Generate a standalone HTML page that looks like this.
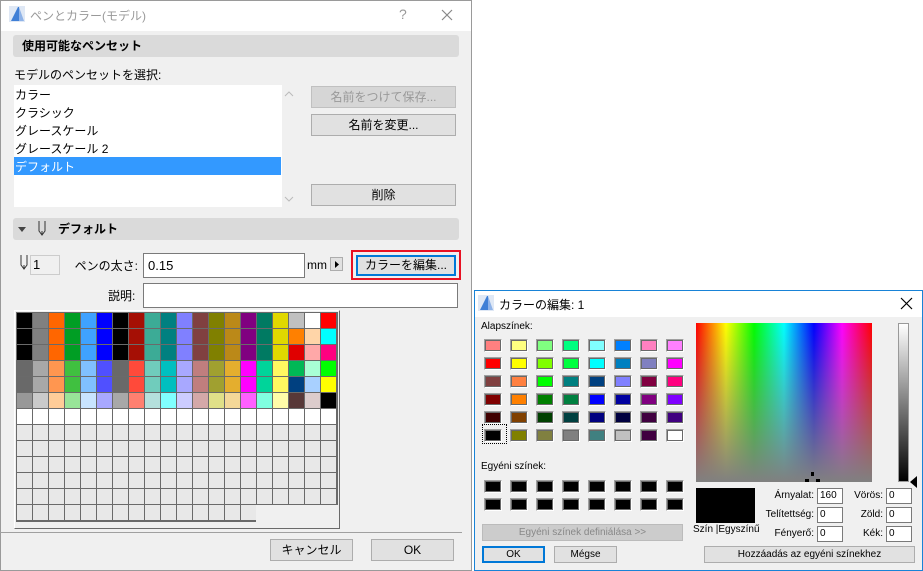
<!DOCTYPE html>
<html><head><meta charset="utf-8">
<style>
*{box-sizing:border-box;margin:0;padding:0}
body{width:923px;height:571px;background:#fff;position:relative;overflow:hidden;font-family:"Liberation Sans","Noto Sans CJK JP",sans-serif;font-size:12px;color:#000}
.a{position:absolute;white-space:nowrap}
.btn{position:absolute;background:#e1e1e1;border:1px solid #adadad;text-align:center;font-size:12px;line-height:20px;white-space:nowrap}
.inp{position:absolute;background:#fff;border:1px solid #7a7a7a}
.hdr{position:absolute;background:#dadada;border-radius:3px;font-weight:bold;font-size:12px;line-height:22px}
.sw{position:absolute;width:18px;height:13px;border:1px solid #a0a0a0;border-right-color:#fff;border-bottom-color:#fff}
.sw i{display:block;width:16px;height:11px;border:1px solid #696969}
.c{position:absolute;width:15px;height:15px}
</style></head><body>
<div class="a" style="left:0;top:0;width:472px;height:571px;background:#f0f0f0;border:1px solid #9a9a9a"></div>
<div class="a" style="top:1px;left:1px;width:470px;height:30px;background:#fff"></div>
<svg class="a" style="left:9px;top:6px" width="16" height="16"><rect x="0" y="0" width="16" height="16" fill="#dfe8f5"/><path d="M2 15 L9 1 L10 1 L10 15Z" fill="#3f7fd6"/><path d="M10 1 L15 15 L10 15Z" fill="#8fb3e8"/></svg>
<div class="a" style="left:30px;top:7px;color:#999;font-size:12px">ペンとカラー(モデル)</div>
<div class="a" style="left:399px;top:6px;color:#999;font-size:14px">?</div>
<svg class="a" style="left:441px;top:9px" width="12" height="12"><path d="M1 1L11 11M11 1L1 11" stroke="#888" stroke-width="1.2"/></svg>

<div class="hdr" style="left:13px;top:35px;width:446px;height:22px;padding-left:9px">使用可能なペンセット</div>
<div class="a" style="left:14px;top:66px">モデルのペンセットを選択:</div>
<div class="a" style="left:14px;top:85px;width:268px;height:122px;background:#fff"></div>
<div class="a" style="left:14px;top:157px;width:267px;height:18px;background:#3399ff"></div>
<div class="a" style="left:15px;top:86px;line-height:18px">カラー<br>クラシック<br>グレースケール<br>グレースケール 2<br><span style="color:#fff">デフォルト</span></div>
<svg class="a" style="left:284px;top:90px" width="10" height="8"><path d="M1 6L5 2L9 6" stroke="#bbb" fill="none"/></svg>
<svg class="a" style="left:284px;top:195px" width="10" height="8"><path d="M1 2L5 6L9 2" stroke="#bbb" fill="none"/></svg>
<div class="btn" style="left:311px;top:86px;width:145px;height:22px;background:#d6d6d6;border-color:#c0c0c0;color:#999">名前をつけて保存...</div>
<div class="btn" style="left:311px;top:114px;width:145px;height:22px">名前を変更...</div>
<div class="btn" style="left:311px;top:184px;width:145px;height:22px">削除</div>

<div class="hdr" style="left:13px;top:218px;width:446px;height:22px;padding-left:45px">デフォルト</div>
<svg class="a" style="left:17px;top:225px" width="10" height="8"><path d="M1 2L9 2L5 7Z" fill="#444"/></svg>
<svg class="a" style="left:37px;top:220px" width="10" height="17"><path d="M2 1V11L5 15L8 11V1" stroke="#333" fill="none"/><path d="M5 11V15" stroke="#333"/></svg>
<svg class="a" style="left:19px;top:254px" width="10" height="18"><path d="M2 1V11L5 15L8 11V1" stroke="#333" fill="none"/><path d="M5 11V15" stroke="#333"/></svg>
<div class="a" style="left:30px;top:255px;width:30px;height:20px;border:1px solid #ccc;background:#f0f0f0;line-height:18px;padding-left:2px;font-size:13px">1</div>
<div class="a" style="left:60px;top:257px;width:78px;text-align:right;font-size:12px">ペンの太さ:</div>
<div class="inp" style="left:143px;top:253px;width:162px;height:25px;line-height:23px;padding-left:4px;font-size:13px">0.15</div>
<div class="a" style="left:307px;top:258px;font-size:12px">mm</div>
<div class="a" style="left:330px;top:257px;width:13px;height:14px;border:1px solid #adadad;background:#e1e1e1"></div>
<svg class="a" style="left:333px;top:260px" width="8" height="9"><path d="M2 1L6 4.5L2 8Z" fill="#000"/></svg>
<div class="a" style="left:351px;top:250px;width:110px;height:30px;border:2px solid #e81123"></div>
<div class="btn" style="left:356px;top:255px;width:100px;height:21px;border:2px solid #0078d7;line-height:17px">カラーを編集...</div>
<div class="a" style="left:108px;top:287px">説明:</div>
<div class="inp" style="left:143px;top:283px;width:315px;height:25px"></div>

<div class="a" style="left:14px;top:310px;width:326px;height:219px;border:1px solid #fff;border-right-color:#6a6a6a;border-bottom-color:#6a6a6a;background:#f0f0f0"></div>
<div class="a" style="left:16px;top:312px;width:322px;height:210px;background:#6a6a6a"></div>
<div class="a" style="left:256px;top:505px;width:82px;height:17px;background:#f0f0f0"></div>
<div id="grid"></div>

<div class="a" style="left:0;top:532px;width:462px;height:1px;background:#a0a0a0"></div>
<div class="btn" style="left:270px;top:539px;width:83px;height:22px">キャンセル</div>
<div class="btn" style="left:371px;top:539px;width:83px;height:22px">OK</div>

<div class="a" style="left:474px;top:290px;width:449px;height:281px;background:#f0f0f0;border:1px solid #1883d7"></div>
<div class="a" style="left:475px;top:291px;width:447px;height:26px;background:#fff"></div>
<svg class="a" style="left:478px;top:295px" width="16" height="16"><rect width="16" height="16" fill="#dfe8f5"/><path d="M2 15 L9 1 L10 1 L10 15Z" fill="#3f7fd6"/><path d="M10 1 L15 15 L10 15Z" fill="#8fb3e8"/></svg>
<div class="a" style="left:499px;top:296px;font-size:12px">カラーの編集: 1</div>
<svg class="a" style="left:900px;top:297px" width="13" height="13"><path d="M1 1L12 12M12 1L1 12" stroke="#000" stroke-width="1.2"/></svg>
<div class="a" style="left:481px;top:321px;font-size:10px">Alapszínek:</div>
<div class="a" style="left:481px;top:461px;font-size:10px">Egyéni színek:</div>
<div id="basic"></div>
<div class="a" style="left:482px;top:424px;width:25px;height:20px;border:1px dotted #000"></div>
<div class="btn" style="left:482px;top:524px;width:201px;height:17px;line-height:15px;font-size:10px;color:#888;background:#cccccc;border-color:#bbb">Egyéni színek definiálása &gt;&gt;</div>
<div class="btn" style="left:482px;top:546px;width:63px;height:17px;line-height:13px;font-size:10px;border:2px solid #0078d7">OK</div>
<div class="btn" style="left:554px;top:546px;width:63px;height:17px;line-height:15px;font-size:10px">Mégse</div>
<div class="a" style="left:696px;top:323px;width:176px;height:159px;background:linear-gradient(to bottom,rgba(128,128,128,0),#808080),linear-gradient(to right,#f00,#ff0 17%,#0f0 33%,#0ff 50%,#00f 67%,#f0f 83%,#f00)"></div>
<div class="a" style="left:811px;top:472px;width:3px;height:4px;background:#000"></div>
<div class="a" style="left:805px;top:479px;width:4px;height:3px;background:#000"></div>
<div class="a" style="left:816px;top:479px;width:4px;height:3px;background:#000"></div>
<div class="a" style="left:898px;top:323px;width:11px;height:159px;border:1px solid #999;background:linear-gradient(#fff,#000)"></div>
<svg class="a" style="left:910px;top:476px" width="8" height="12"><path d="M7 0V12L0 6Z" fill="#000"/></svg>
<div class="a" style="left:696px;top:488px;width:59px;height:35px;background:#000"></div>
<div class="a" style="left:693px;top:524px;font-size:10px">Szín |Egyszínű</div>
<div class="a" style="left:740px;top:490px;width:74px;text-align:right;font-size:10px">Árnyalat:</div>
<div class="a" style="left:740px;top:509px;width:74px;text-align:right;font-size:10px">Telítettség:</div>
<div class="a" style="left:740px;top:528px;width:74px;text-align:right;font-size:10px">Fényerő:</div>
<div class="inp" style="left:817px;top:488px;width:26px;height:16px;font-size:10px;line-height:14px;padding-left:2px">160</div>
<div class="inp" style="left:817px;top:507px;width:26px;height:16px;font-size:10px;line-height:14px;padding-left:2px">0</div>
<div class="inp" style="left:817px;top:526px;width:26px;height:16px;font-size:10px;line-height:14px;padding-left:2px">0</div>
<div class="inp" style="left:886px;top:488px;width:26px;height:16px;font-size:10px;line-height:14px;padding-left:2px">0</div>
<div class="inp" style="left:886px;top:507px;width:26px;height:16px;font-size:10px;line-height:14px;padding-left:2px">0</div>
<div class="inp" style="left:886px;top:526px;width:26px;height:16px;font-size:10px;line-height:14px;padding-left:2px">0</div>
<div class="a" style="left:845px;top:490px;width:38px;text-align:right;font-size:10px">Vörös:</div>
<div class="a" style="left:845px;top:509px;width:38px;text-align:right;font-size:10px">Zöld:</div>
<div class="a" style="left:845px;top:528px;width:38px;text-align:right;font-size:10px">Kék:</div>
<div class="btn" style="left:704px;top:546px;width:211px;height:17px;line-height:15px;font-size:10px">Hozzáadás az egyéni színekhez</div>
<script>
var rows=[
["#000","#808080","#ff6600","#009e24","#3fa2ff","#0000ff","#000","#a50f05","#3cab96","#008080","#8080ff","#804040","#808000","#bb8918","#800080","#007a62","#e0d800","#c0c0c0","#fff","#ff0000"],
["#000","#808080","#ff6600","#009e24","#3fa2ff","#0000ff","#000","#a50f05","#3cab96","#008080","#8080ff","#804040","#808000","#bb8918","#800080","#007a62","#e0d800","#ff8000","#ffd5a8","#00ffff"],
["#000","#808080","#ff6600","#009e24","#3fa2ff","#0000ff","#000","#a50f05","#3cab96","#008080","#8080ff","#804040","#808000","#bb8918","#800080","#007a62","#e0d800","#e00000","#ffa8a8","#ff0080"],
["#696969","#a8a8a8","#ff9650","#40c040","#80c0ff","#5050ff","#696969","#ff4a3a","#70ccbc","#00bfbf","#a8a8ff","#c07e7e","#a0a030","#e4ae2e","#ff00ff","#00d49a","#fff860","#00b856","#a8ffd5","#00ff00"],
["#696969","#a8a8a8","#ff9650","#40c040","#80c0ff","#5050ff","#696969","#ff4a3a","#70ccbc","#00bfbf","#a8a8ff","#c07e7e","#a0a030","#e4ae2e","#ff00ff","#00d49a","#fff860","#004080","#a8d0ff","#ffff00"],
["#989898","#cacaca","#ffcc98","#98e498","#c8e4ff","#a8a8ff","#a8a8a8","#ff8070","#b4e0dc","#80ffff","#ccccff","#d4a8a8","#e0e088","#f4d898","#ff60ff","#80ffe0","#fffca8","#583838","#dccccc","#000"]];
var h='';
for(var r=0;r<13;r++){for(var c=0;c<20;c++){if(r==12&&c>=15)continue;var col=r<6?rows[r][c]:(r==6?'#fff':'#e8e8e8');
h+='<div class="c" style="left:'+(17+c*16)+'px;top:'+(313+r*16)+'px;background:'+col+'"></div>';}}
h+='<div class="a" style="left:19px;top:315px;width:11px;height:11px;background:#000;border-radius:0 3px 3px 3px"></div>';
document.getElementById('grid').innerHTML=h;
var b=[["#ff8080","#ffff80","#80ff80","#00ff80","#80ffff","#0080ff","#ff80c0","#ff80ff"],
["#ff0000","#ffff00","#80ff00","#00ff40","#00ffff","#0080c0","#8080c0","#ff00ff"],
["#804040","#ff8040","#00ff00","#008080","#004080","#8080ff","#800040","#ff0080"],
["#800000","#ff8000","#008000","#008040","#0000ff","#0000a0","#800080","#8000ff"],
["#400000","#804000","#004000","#004040","#000080","#000040","#400040","#400080"],
["#000000","#808000","#808040","#808080","#408080","#c0c0c0","#400040","#ffffff"]];
var s='';
for(var r=0;r<6;r++)for(var c=0;c<8;c++)s+='<div class="sw" style="left:'+(484+c*26)+'px;top:'+(339+r*18)+'px"><i style="background:'+b[r][c]+'"></i></div>';
for(var r=0;r<2;r++)for(var c=0;c<8;c++)s+='<div class="sw" style="left:'+(484+c*26)+'px;top:'+(480+r*18)+'px"><i style="background:#000"></i></div>';
document.getElementById('basic').innerHTML=s;
</script>
</body></html>
